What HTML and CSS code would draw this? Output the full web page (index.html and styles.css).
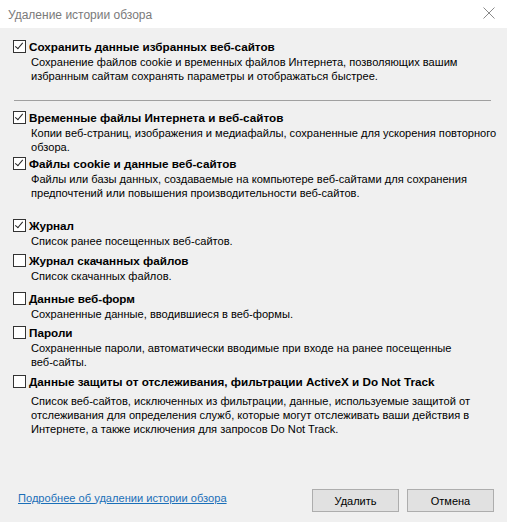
FILE: index.html
```html
<!DOCTYPE html>
<html lang="ru">
<head>
  <meta charset="UTF-8" />
  <title>Удаление истории обзора</title>
  <link rel="stylesheet" href="styles.css">
</head>
<body>
  <div class="dialog">
    <div class="titlebar">
      <span class="title">Удаление истории обзора</span>
      <svg class="close" width="12" height="12" viewBox="0 0 12 12">
        <path d="M0.5 0.5 L11.5 11.5 M11.5 0.5 L0.5 11.5" stroke="#8a8a8a" stroke-width="1" fill="none"/>
      </svg>
    </div>
    <div class="content">
      <div class="option first">
        <label class="head"><span class="box checked"></span>Сохранить данные избранных веб-сайтов</label>
        <p class="desc">Сохранение файлов cookie и временных файлов Интернета, позволяющих вашим<br>избранным сайтам сохранять параметры и отображаться быстрее.</p>
      </div>
      <hr class="sep">
      <div class="option after-sep">
        <label class="head"><span class="box checked"></span>Временные файлы Интернета и веб-сайтов</label>
        <p class="desc">Копии веб-страниц, изображения и медиафайлы, сохраненные для ускорения повторного<br>обзора.</p>
      </div>
      <div class="option tight">
        <label class="head"><span class="box checked"></span>Файлы cookie и данные веб-сайтов</label>
        <p class="desc">Файлы или базы данных, создаваемые на компьютере веб-сайтами для сохранения<br>предпочтений или повышения производительности веб-сайтов.</p>
      </div>
      <div class="option wide">
        <label class="head"><span class="box checked"></span>Журнал</label>
        <p class="desc">Список ранее посещенных веб-сайтов.</p>
      </div>
      <div class="option">
        <label class="head"><span class="box"></span>Журнал скачанных файлов</label>
        <p class="desc">Список скачанных файлов.</p>
      </div>
      <div class="option mid">
        <label class="head"><span class="box"></span>Данные веб-форм</label>
        <p class="desc">Сохраненные данные, вводившиеся в веб-формы.</p>
      </div>
      <div class="option small">
        <label class="head"><span class="box"></span>Пароли</label>
        <p class="desc">Сохраненные пароли, автоматически вводимые при входе на ранее посещенные<br>веб-сайты.</p>
      </div>
      <div class="option">
        <label class="head"><span class="box"></span>Данные защиты от отслеживания, фильтрации ActiveX и Do Not Track</label>
        <p class="desc spaced">Список веб-сайтов, исключенных из фильтрации, данные, используемые защитой от<br>отслеживания для определения служб, которые могут отслеживать ваши действия в<br>Интернете, а также исключения для запросов Do Not Track.</p>
      </div>
    </div>
    <div class="footer">
      <a class="more" href="#">Подробнее об удалении истории обзора</a>
      <div class="buttons">
        <button class="btn">Удалить</button>
        <button class="btn">Отмена</button>
      </div>
    </div>
  </div>
</body>
</html>
```

FILE: styles.css
```css
html, body {
  margin: 0;
  padding: 0;
  height: 100%;
  background: #f0f0f0;
  font-family: "Liberation Sans", Arial, sans-serif;
  font-size: 11.1px;
  color: #000;
}
.dialog {
  height: 522px;
  display: flex;
  flex-direction: column;
  background: #f0f0f0;
}
.titlebar {
  height: 28px;
  background: #fff;
  display: flex;
  align-items: center;
  justify-content: space-between;
  padding: 0 12px 0 8px;
}
.title {
  color: #7a7a7a;
  font-size: 12px;
  margin-top: 1px;
}
.close {
  margin-top: -3px;
}
.content {
  padding: 10px 16px 0 13px;
}
.option {
  margin-top: 4px;
}
.option.first { margin-top: 0; }
.option.after-sep { margin-top: 8px; }
.option.tight { margin-top: 1px; }
.option.wide { margin-top: 17px; }
.option.mid { margin-top: 7px; }
.option.small { margin-top: 3px; }
.head {
  display: flex;
  align-items: center;
  height: 16px;
  font-size: 11.7px;
  font-weight: bold;
  white-space: nowrap;
}
.box {
  box-sizing: border-box;
  width: 13px;
  height: 13px;
  border: 1px solid #333;
  background: #fff;
  margin-right: 3px;
  flex: none;
  position: relative;
}
.box.checked::after {
  content: "";
  position: absolute;
  left: 3px;
  top: 0px;
  width: 3px;
  height: 7px;
  border: solid #222;
  border-width: 0 1px 1px 0;
  transform: rotate(40deg);
}
.desc {
  margin: 1px 0 0 18px;
  line-height: 14px;
  white-space: nowrap;
}
.desc.spaced {
  margin-top: 5px;
}
.sep {
  border: none;
  border-top: 1px solid #a0a0a0;
  margin: 17px 0 0 1px;
  width: 477px;
}
.footer {
  margin-top: auto;
  display: flex;
  align-items: center;
  justify-content: space-between;
  padding: 0 13px 10px 18px;
}
.more {
  color: #1a6fb8;
  text-decoration: underline;
  margin-bottom: 6px;
}
.buttons {
  display: flex;
  gap: 8px;
}
.btn {
  width: 87px;
  height: 23px;
  background: #e1e1e1;
  border: 1px solid #adadad;
  font-family: inherit;
  font-size: 11px;
  color: #000;
  padding: 0;
}
```
